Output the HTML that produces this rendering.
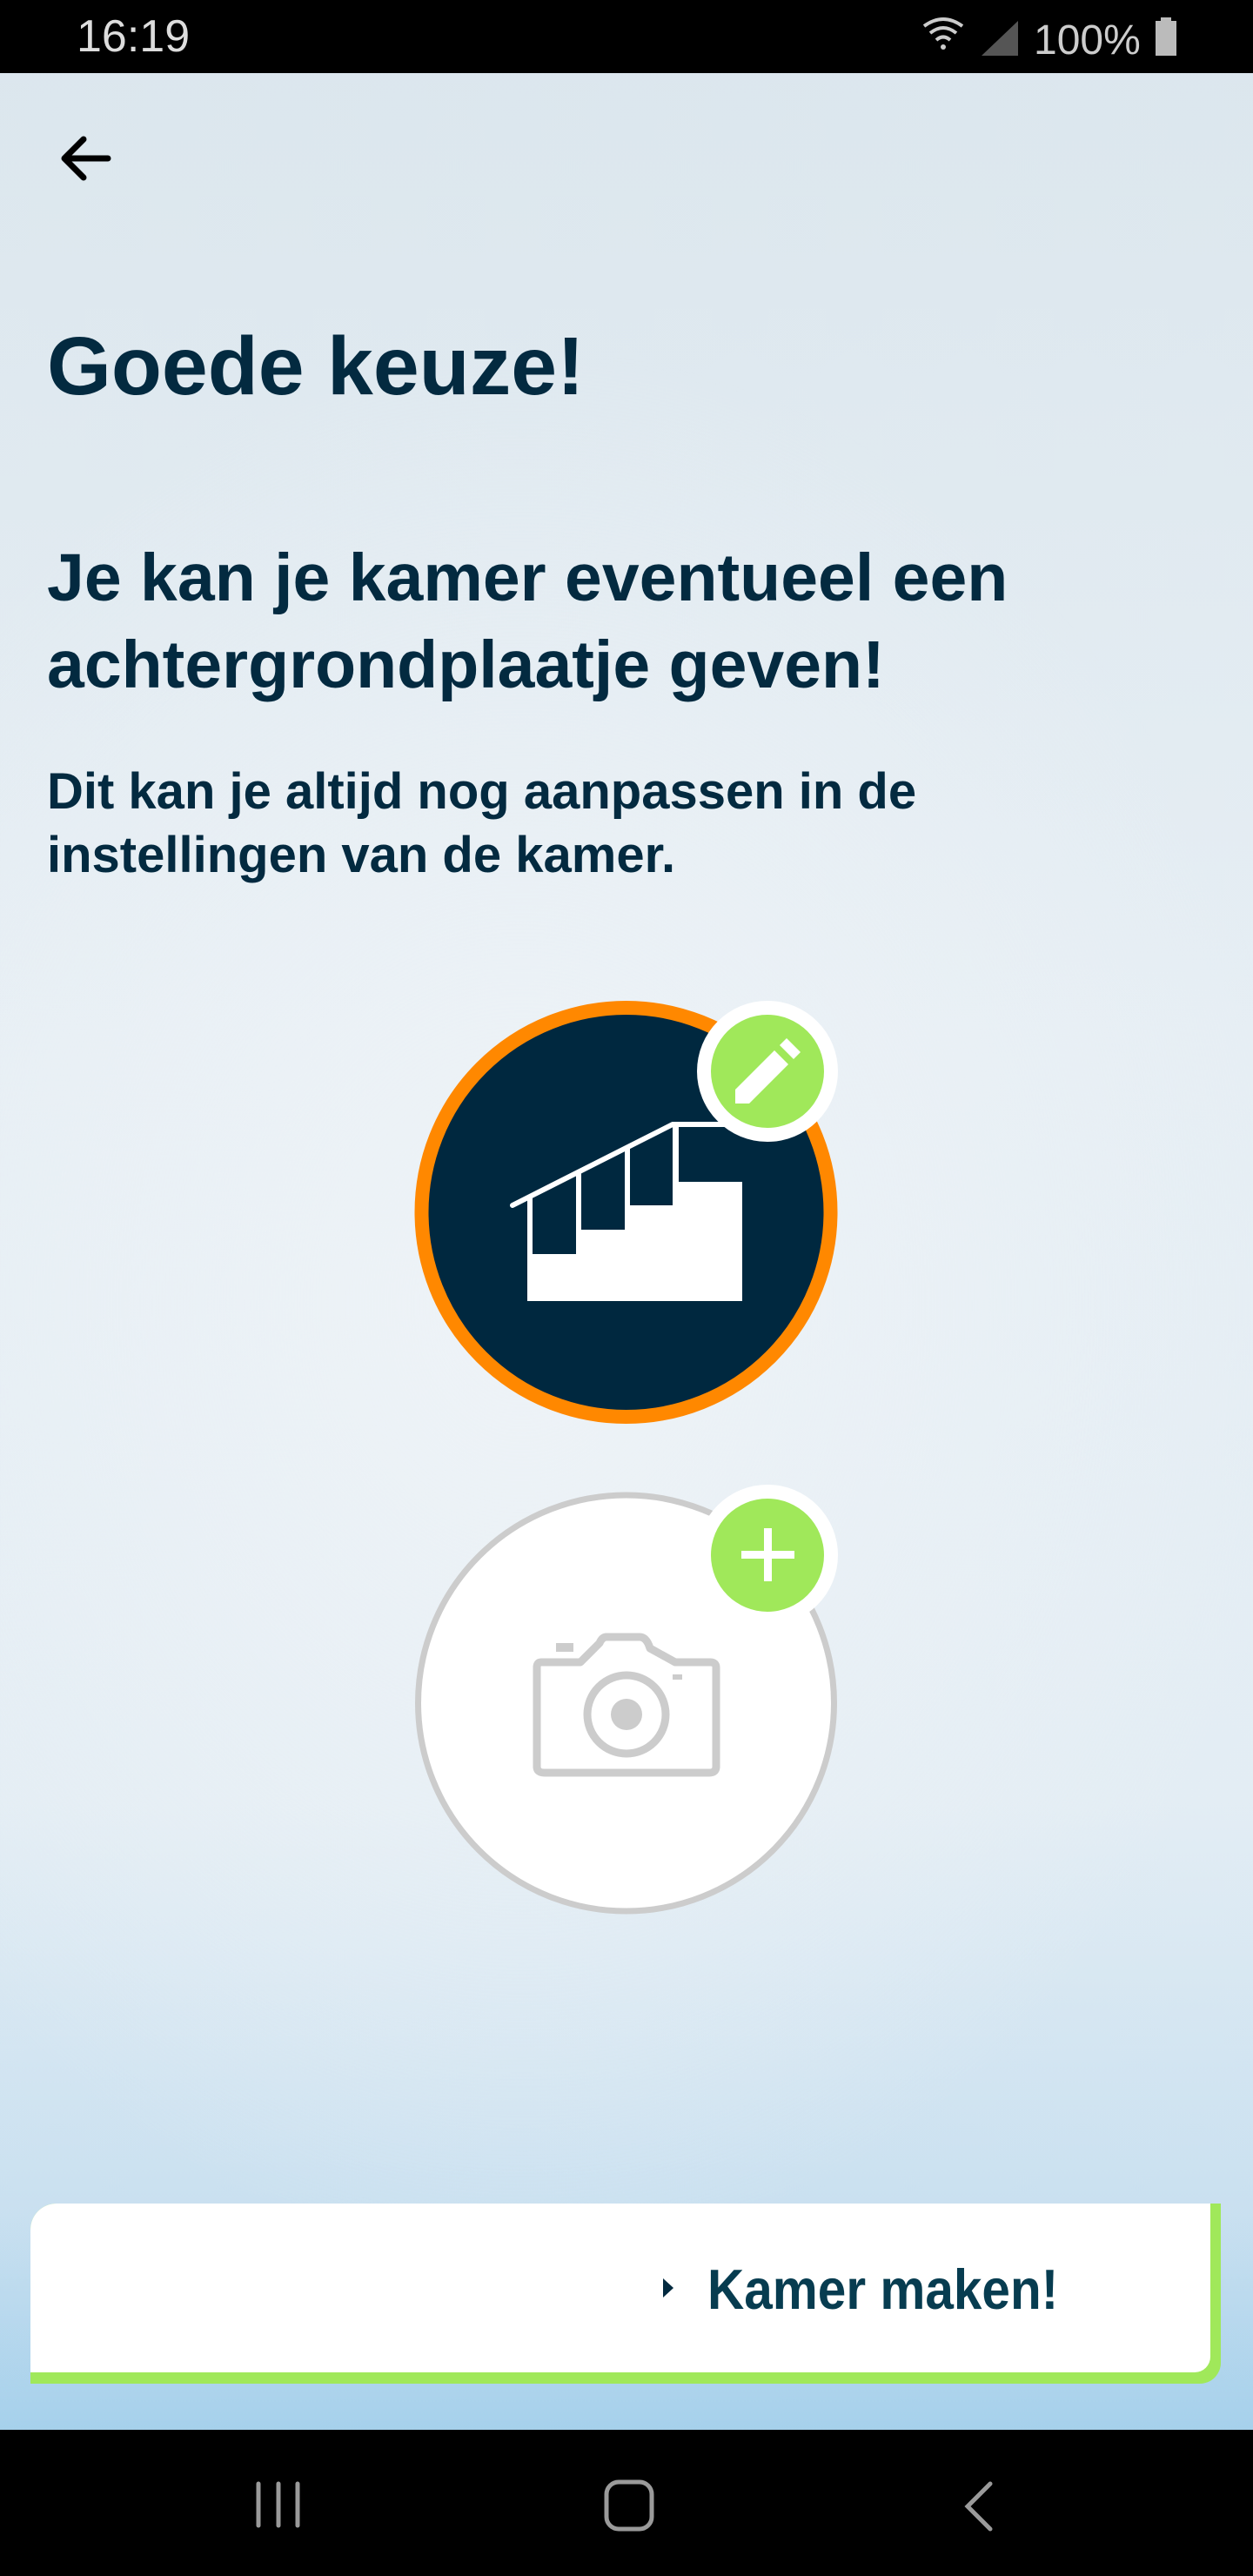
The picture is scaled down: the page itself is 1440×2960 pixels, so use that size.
<!DOCTYPE html>
<html><head><meta charset="utf-8"><style>
*{margin:0;padding:0;box-sizing:border-box}
html,body{width:1440px;height:2960px;overflow:hidden}
body{position:relative;font-family:"Liberation Sans",sans-serif;
background:radial-gradient(ellipse 900px 1100px at 600px 1500px,#eef3f7 0%,rgba(238,243,247,0) 100%),
linear-gradient(180deg,#dbe6ed 0%,#e6eef4 40%,#e3edf4 70%,#c9e0f0 86%,#8ec6e8 100%);}
.sb{position:absolute;left:0;top:0;width:1440px;height:84px;background:#000;color:#ddd}
.nav{position:absolute;left:0;top:2792px;width:1440px;height:168px;background:#000}
.t{position:absolute;left:54px;color:#032a40;font-weight:bold;white-space:nowrap}
</style></head><body>
<div class="sb">
 <div style="position:absolute;left:88px;top:12px;font-size:52px;">16:19</div>
 <svg style="position:absolute;left:1060px;top:18px" width="300" height="50" viewBox="0 0 300 50">
  <path d="M2 12 Q 24 -4 46 12" stroke="#ccc" stroke-width="4" fill="none"/>
  <path d="M9 20 Q 24 8 39 20" stroke="#ccc" stroke-width="4" fill="none"/>
  <path d="M16 28 Q 24 21 32 28" stroke="#ccc" stroke-width="4" fill="none"/>
  <circle cx="24" cy="36" r="3" fill="#ccc"/>
  <polygon points="68,46 110,46 110,6" fill="#555"/>
  <text x="128" y="44" font-family="Liberation Sans" font-size="48" fill="#ccc">100%</text>
  <rect x="268" y="6" width="24" height="40" fill="#bbb"/><rect x="274" y="2" width="12" height="6" fill="#bbb"/>
 </svg>
</div>
<svg style="position:absolute;left:66px;top:152px" width="64" height="60" viewBox="0 0 64 60">
 <path d="M58 30 H10 M30 8 L8 30 L30 52" stroke="#000" stroke-width="7" fill="none" stroke-linecap="round" stroke-linejoin="round"/>
</svg>
<div class="t" style="top:366px;font-size:95px;line-height:110px">Goede keuze!</div>
<div class="t" style="top:614px;font-size:77px;line-height:100px">Je kan je kamer eventueel een<br>achtergrondplaatje geven!</div>
<div class="t" style="top:873px;font-size:58px;line-height:73px">Dit kan je altijd nog aanpassen in de<br>instellingen van de kamer.</div>

<svg style="position:absolute;left:0;top:0" width="1440" height="2792" viewBox="0 0 1440 2792">
 <circle cx="719.5" cy="1393" r="235" fill="#00283f" stroke="#ff8800" stroke-width="16"/>
 <line x1="589" y1="1385" x2="773" y2="1292" stroke="#fff" stroke-width="6" stroke-linecap="round"/>
 <line x1="773" y1="1292" x2="840" y2="1292" stroke="#fff" stroke-width="6"/>
 <polygon points="606,1441 662,1441 662,1413 718,1413 718,1385 773,1385 773,1358 853,1358 853,1495 606,1495" fill="#fff"/>
 <rect x="606" y="1375" width="6" height="70" fill="#fff"/>
 <rect x="662" y="1345" width="6" height="70" fill="#fff"/>
 <rect x="718" y="1318" width="6" height="70" fill="#fff"/>
 <rect x="773" y="1290" width="7" height="70" fill="#fff"/>
 <circle cx="882" cy="1231" r="81" fill="#fff"/>
 <circle cx="882" cy="1231" r="65" fill="#a0e85a"/>
 <path d="M845 1268 L845 1252 L890 1207 L906 1223 L861 1268 Z M896 1201 L904 1193 L920 1209 L912 1217 Z" fill="#fff"/>
 <circle cx="719.5" cy="1957" r="239" fill="#fff" stroke="#cccccc" stroke-width="7"/>
 <circle cx="882" cy="1787" r="81" fill="#fff"/>
 <circle cx="882" cy="1787" r="65" fill="#a0e85a"/>
 <rect x="852" y="1782" width="61" height="9" fill="#fff"/>
 <rect x="878" y="1756" width="9" height="61" fill="#fff"/>
 <path d="M622 1910 Q617 1910 617 1916 V2030 Q617 2037 626 2037 H815 Q823 2037 823 2030 V1916 Q823 1910 816 1910 H776 L747 1894 Q743 1881 735 1881 H697 Q692 1881 689 1888 L667 1910 Z" fill="none" stroke="#ccc" stroke-width="9" stroke-linejoin="round"/>
 <rect x="639" y="1888" width="20" height="10" fill="#ccc"/>
 <rect x="773" y="1924" width="11" height="6" fill="#ccc"/>
 <circle cx="720" cy="1970" r="45" fill="none" stroke="#ccc" stroke-width="9"/>
 <circle cx="720" cy="1970" r="18" fill="#ccc"/>
</svg>

<div style="position:absolute;left:35px;top:2532px;width:1368px;height:207px;background:#a0e85a;border-radius:30px 0 24px 0"></div>
<div style="position:absolute;left:35px;top:2532px;width:1356px;height:194px;background:#fff;border-radius:30px 0 18px 0"></div>
<svg style="position:absolute;left:762px;top:2618px" width="14" height="22"><polygon points="0,0 12,11 0,22" fill="#032a40"/></svg>
<div style="position:absolute;left:813px;top:2594px;font-size:65px;font-weight:bold;color:#073c50;line-height:74px;white-space:nowrap;transform:scaleX(0.9);transform-origin:left">Kamer maken!</div>

<div class="nav">
 <svg width="1440" height="168" viewBox="0 0 1440 168">
  <g stroke="#9a9a9a" stroke-width="5" stroke-linecap="round" fill="none">
   <line x1="297" y1="62" x2="297" y2="110"/><line x1="320" y1="62" x2="320" y2="110"/><line x1="342" y1="62" x2="342" y2="110"/>
   <rect x="697" y="60" width="52" height="54" rx="14"/>
   <path d="M1138 62 L1112 88 L1138 114"/>
  </g>
 </svg>
</div>
</body></html>
